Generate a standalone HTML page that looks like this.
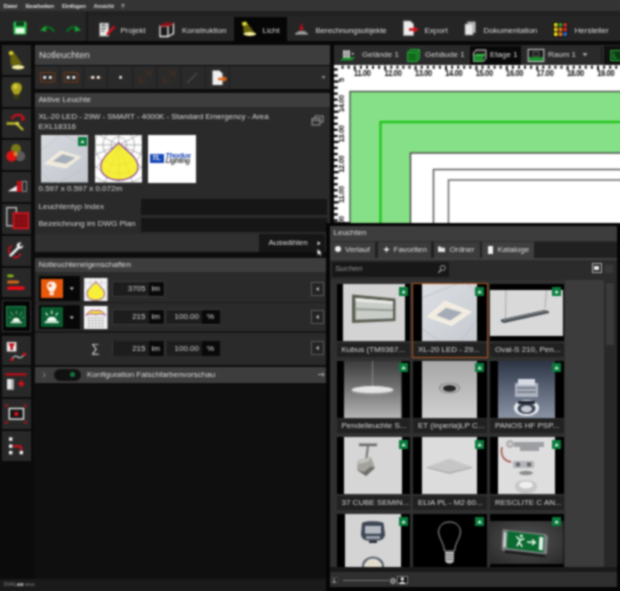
<!DOCTYPE html>
<html><head><meta charset="utf-8"><title>DIALux evo</title>
<style>
html,body{margin:0;padding:0;background:#0c0c0c;}
#root{position:relative;width:620px;height:591px;overflow:hidden;background:#0d0d0d;font-family:"Liberation Sans",sans-serif;filter:url(#blr);}
#root div,#root span,#root svg{position:absolute;box-sizing:border-box;}
#root span{white-space:nowrap;}
</style></head><body><svg width="0" height="0" style="position:absolute"><defs><filter id="blr" x="0" y="0" width="100%" height="100%" color-interpolation-filters="sRGB"><feConvolveMatrix order="5" kernelMatrix="0.0119 0.0627 0.1090 0.0627 0.0119 0.0627 0.3302 0.5746 0.3302 0.0627 0.1090 0.5746 1.0000 0.5746 0.1090 0.0627 0.3302 0.5746 0.3302 0.0627 0.0119 0.0627 0.1090 0.0627 0.0119" divisor="5.6043" edgeMode="duplicate" preserveAlpha="true"/></filter></defs></svg><div id="root">

<div style="left:0px;top:0px;width:620px;height:11px;background:#343434;"></div>
<span style="left:3.5px;top:1.60px;font-size:6px;line-height:8px;color:#dadada;font-weight:bold;letter-spacing:-0.25px;">Datei</span>
<span style="left:25.5px;top:1.60px;font-size:6px;line-height:8px;color:#dadada;font-weight:bold;letter-spacing:-0.25px;">Bearbeiten</span>
<span style="left:62px;top:1.60px;font-size:6px;line-height:8px;color:#dadada;font-weight:bold;letter-spacing:-0.25px;">Einfügen</span>
<span style="left:93.5px;top:1.60px;font-size:6px;line-height:8px;color:#dadada;font-weight:bold;letter-spacing:-0.25px;">Ansicht</span>
<span style="left:121px;top:1.60px;font-size:6px;line-height:8px;color:#dadada;font-weight:bold;letter-spacing:-0.25px;">?</span>
<div style="left:0px;top:11px;width:620px;height:30px;background:#252525;"></div>
<div style="left:88px;top:11px;width:532px;height:5px;background:#212121;"></div>
<div style="left:0px;top:41px;width:620px;height:4.2px;background:#080808;"></div>
<div style="left:0px;top:11px;width:86px;height:30px;background:#262626;"></div>
<div style="left:86px;top:12px;width:1.6px;height:29px;background:#181818;"></div>
<svg style="left:13px;top:21px" width="14" height="14" viewBox="0 0 14 14"><rect x="0.5" y="0.5" width="13" height="13" rx="1.5" fill="#2fbf4f"/><rect x="3" y="0.5" width="8" height="4.5" fill="#0b3d18"/><rect x="2.5" y="7" width="9" height="5.5" fill="#e9ffe9"/></svg>
<svg style="left:39.5px;top:24px" width="16" height="9" viewBox="0 0 16 9"><path d="M3.5 5 C5 1 11.5 0 15.5 7.5 L12.5 8 C10 3.5 7 3.8 5.5 6.3 Z" fill="#0d6420"/><path d="M0 6.3 L5.8 1.6 L6.3 7.8 Z" fill="#1aa233"/></svg>
<svg style="left:65px;top:24px" width="16" height="9" viewBox="0 0 16 9"><path d="M12.5 5 C11 1 4.5 0 0.5 7.5 L3.5 8 C6 3.5 9 3.8 10.5 6.3 Z" fill="#0d6420"/><path d="M16 6.3 L10.2 1.6 L9.7 7.8 Z" fill="#1aa233"/></svg>
<svg style="left:98px;top:21px" width="18" height="17" viewBox="0 0 18 17"><rect x="1.4" y="2" width="9.4" height="13.2" fill="#ececec" stroke="#666" stroke-width="0.8"/><path d="M3 5h6M3 7.6h5M3 10.2h3.5" stroke="#555" stroke-width="1.1"/><path d="M4.2 3.2 L5.2 4.6 L7 2.6" stroke="#333" stroke-width="0.8" fill="none"/><path d="M9.6 13 L15.8 6.2" stroke="#cc0f1a" stroke-width="2.5" stroke-linecap="round"/></svg>
<span style="left:120.5px;top:25.50px;font-size:8px;line-height:10px;color:#dcdcdc;">Projekt</span>
<svg style="left:158px;top:21px" width="18" height="17" viewBox="0 0 18 17"><path d="M2 5 L10 5 L10 15.5 L2 15.5 Z M10 5 L15.5 2.5 L15.5 12.5 L10 15.5" fill="#1a1a1a" stroke="#f0f0f0" stroke-width="1.3"/><path d="M2 5 L7.5 2.2 L15.5 2.5 L10 5 Z" fill="#8e0e16" stroke="#9a1018" stroke-width="1.2"/></svg>
<span style="left:182px;top:25.50px;font-size:8px;line-height:10px;color:#dcdcdc;">Konstruktion</span>
<div style="left:234px;top:16.6px;width:52.6px;height:26px;background:#060606;"></div>
<svg style="left:240px;top:21px" width="17" height="15" viewBox="0 0 17 15"><path d="M3.2 2.6 L7 2 L14.5 11.6 L3.6 12 Z" fill="#66620f"/><path d="M1.8 1.6 L6 0.6 L7.6 3.8 L2.8 5 Z" fill="#e4dc34"/><ellipse cx="9.8" cy="13" rx="6.3" ry="1.9" fill="#f8f2a0"/></svg>
<span style="left:262.5px;top:25.50px;font-size:8px;line-height:10px;color:#dcdcdc;">Licht</span>
<svg style="left:294px;top:21px" width="15" height="14" viewBox="0 0 15 14"><path d="M1.5 12.5 L5 9.8 L10.5 9.8 L13.5 12.5 Z" fill="#8a8a8a"/><path d="M7.5 2.5 L7.5 8 M5.5 6.2 L7.5 8.8 L9.5 6.2" stroke="#b80e18" stroke-width="1.5" fill="none"/><path d="M1.2 12.8 H13.8" stroke="#d8d8d8" stroke-width="1.1"/></svg>
<span style="left:315.5px;top:25.50px;font-size:8px;line-height:10px;color:#dcdcdc;letter-spacing:-0.1px;">Berechnungsobjekte</span>
<svg style="left:402px;top:20px" width="18" height="17" viewBox="0 0 18 17"><path d="M1.5 1 L8.5 1 L11.5 4 L11.5 15.5 L1.5 15.5 Z" fill="#ededed" stroke="#999" stroke-width="0.8"/><path d="M7 9.5 H13" stroke="#d0101a" stroke-width="2.6"/><path d="M12.2 6.2 L16.8 9.5 L12.2 12.8 Z" fill="#d0101a"/></svg>
<span style="left:424.5px;top:25.50px;font-size:8px;line-height:10px;color:#dcdcdc;">Export</span>
<svg style="left:464px;top:21px" width="13" height="15" viewBox="0 0 13 15"><rect x="3.5" y="0.8" width="8" height="11" fill="#bdbdbd" stroke="#777" stroke-width="0.6"/><rect x="1" y="3" width="8" height="11" fill="#e6e6e6" stroke="#888" stroke-width="0.6"/></svg>
<span style="left:483.5px;top:25.50px;font-size:8px;line-height:10px;color:#dcdcdc;">Dokumentation</span>
<svg style="left:553px;top:22px" width="15" height="15" viewBox="0 0 15 15"><rect width="15" height="15" fill="#111"/><rect x="1" y="1" width="3.6" height="3.6" fill="#e8d21a"/><rect x="5.7" y="1" width="3.6" height="3.6" fill="#2ca02c"/><rect x="10.4" y="1" width="3.6" height="3.6" fill="#d03030"/><rect x="1" y="5.7" width="3.6" height="3.6" fill="#e8d21a"/><rect x="5.7" y="5.7" width="3.6" height="3.6" fill="#e87a1a"/><rect x="10.4" y="5.7" width="3.6" height="3.6" fill="#d03030"/><rect x="1" y="10.4" width="3.6" height="3.6" fill="#f0e020"/><rect x="5.7" y="10.4" width="3.6" height="3.6" fill="#e87a1a"/><rect x="10.4" y="10.4" width="3.6" height="3.6" fill="#2070d0"/></svg>
<span style="left:574.5px;top:25.50px;font-size:8px;line-height:10px;color:#dcdcdc;">Hersteller</span>
<div style="left:0px;top:45px;width:34px;height:546px;background:#0b0b0b;"></div>
<div style="left:2px;top:45.0px;width:29px;height:29.8px;background:#282828;"></div>
<svg style="left:1px;top:45.0px" width="32" height="30" viewBox="0 0 32 30"><path d="M9 8 L13 7.3 L21.5 19.5 L9.8 20.2 Z" fill="#66620f"/><path d="M7.6 6.8 L11.2 5.8 L12.8 9 L8.6 10.2 Z" fill="#dcd432"/><ellipse cx="17" cy="22.3" rx="6.4" ry="2.2" fill="#f6f0a4"/></svg>
<div style="left:2px;top:76.8px;width:29px;height:29.8px;background:#282828;"></div>
<svg style="left:1px;top:76.8px" width="32" height="30" viewBox="0 0 32 30"><path d="M15.5 5.5 C19.5 5.5 21.5 8.5 20.7 12 C20.2 14.2 18.3 15.5 18.1 17.6 L12.9 17.6 C12.7 15.5 10.8 14.2 10.3 12 C9.5 8.5 11.5 5.5 15.5 5.5 Z" fill="#aaa41c"/><rect x="13" y="18" width="5" height="4.2" fill="#3e3c10"/><ellipse cx="14.4" cy="9.6" rx="2.1" ry="2.6" fill="#d2cc44"/></svg>
<div style="left:2px;top:108.6px;width:29px;height:29.8px;background:#282828;"></div>
<svg style="left:1px;top:108.6px" width="32" height="30" viewBox="0 0 32 30"><path d="M11 10.5 C12 5 20 4 23 9.5" stroke="#c8101a" stroke-width="2.3" fill="none"/><path d="M20.3 8 L24.8 10.8 L20.3 12.3 Z" fill="#c8101a"/><path d="M5.5 14.5 H16.5" stroke="#b8b228" stroke-width="2.6" fill="none"/><path d="M16 15 L22 21" stroke="#c8c230" stroke-width="2.3" fill="none"/><circle cx="16.3" cy="14.6" r="1.9" fill="#dcd64a"/></svg>
<div style="left:2px;top:140.4px;width:29px;height:29.8px;background:#282828;"></div>
<svg style="left:1px;top:140.4px" width="32" height="30" viewBox="0 0 32 30"><circle cx="15" cy="9" r="5" fill="#7a7a1a"/><circle cx="19.2" cy="16.2" r="5" fill="#5c5c5c"/><circle cx="10.6" cy="16.2" r="5.4" fill="#e01414"/><circle cx="14.5" cy="14" r="2.2" fill="#d88a28"/></svg>
<div style="left:2px;top:172.2px;width:29px;height:29.8px;background:#282828;"></div>
<svg style="left:1px;top:172.2px" width="32" height="30" viewBox="0 0 32 30"><path d="M6.7 19.3 L16.6 19.3 L16.6 13.3 Z" fill="#f4f4f4"/><rect x="15.8" y="9" width="5" height="11" fill="#c0101a"/><rect x="21.3" y="9.5" width="4.4" height="9.8" fill="#2a2a2a" stroke="#9a9a9a" stroke-width="0.9"/></svg>
<div style="left:2px;top:204.0px;width:29px;height:29.8px;background:#282828;"></div>
<svg style="left:1px;top:204.0px" width="32" height="30" viewBox="0 0 32 30"><rect x="5.8" y="3.6" width="9.6" height="18.2" fill="none" stroke="#d4d4d4" stroke-width="1.2"/><path d="M12.5 9.2 H27.3 V24.3 H12.5 Z" fill="#7e0e14" stroke="#d8151f" stroke-width="1.7"/><path d="M12.5 14 H27.3 M12.5 19 H27.3 M17.5 9.2 V24.3 M22.5 9.2 V24.3" stroke="#a01018" stroke-width="0.7"/></svg>
<div style="left:2px;top:235.8px;width:29px;height:29.8px;background:#282828;"></div>
<svg style="left:1px;top:235.8px" width="32" height="30" viewBox="0 0 32 30"><g transform="translate(2.8,2.6) scale(0.76)"><path d="M9 22 L18.5 12.5" stroke="#f2f2f2" stroke-width="3.5" stroke-linecap="round"/><path d="M17 8 C18 5.5 21 4.5 23.5 5.5 L20.5 8.5 L21.5 10.5 L24 10 L25.5 8 C26 11 24 13.5 21 13.5 C18.5 13.5 16.5 11 17 8 Z" fill="#f2f2f2"/><path d="M10.5 9.5 C6 11.5 5.5 16.5 8 19.5 M12 24 C16 26 20.5 24.5 22 19.5" stroke="#c8101a" stroke-width="2.4" fill="none"/></g></svg>
<div style="left:2px;top:267.6px;width:29px;height:29.8px;background:#282828;"></div>
<svg style="left:1px;top:267.6px" width="32" height="30" viewBox="0 0 32 30"><path d="M6.4 6.6 H11.6 L13.2 7.9 L11.6 9.2 H6.4 Z" fill="#8ab81a"/><path d="M6.4 12.5 H17 L18.6 14 L17 15.5 H6.4 Z" fill="#d86a18"/><path d="M6.4 18.3 H22.4 L24.2 20.1 L22.4 21.9 H6.4 Z" fill="#e40e18"/></svg>
<div style="left:1.8px;top:300.3px;width:29.4px;height:31.8px;background:#050505;border:1.6px solid #363636;"></div>
<svg style="left:6.4px;top:306.1px" width="20" height="20.6" viewBox="0 0 21 21" preserveAspectRatio="none"><rect width="21" height="21" fill="#095229"/><rect x="0.6" y="0.6" width="19.8" height="19.8" fill="none" stroke="#1f8a50" stroke-width="1.1"/><path d="M6.5 16 C6.5 10.8 14.8 10.8 14.8 16 Z" fill="#f4fff6"/><rect x="4.5" y="16" width="12.5" height="1.6" fill="#c8e8d0"/><path d="M11 8.5 V5 M7.5 10 L5 6 M14.5 10 L17 6 M5.5 12.5 L3 11 M16.5 12.5 L19 11" stroke="#8fcfa8" stroke-width="0.8"/></svg>
<div style="left:2px;top:335.5px;width:29px;height:29.8px;background:#282828;"></div>
<svg style="left:1px;top:335.5px" width="32" height="30" viewBox="0 0 32 30"><rect x="5.8" y="6" width="9.6" height="9.5" fill="#ececec"/><path d="M7.3 7.3 H14 L12 11 V14 H9.4 V11 Z" fill="#c8101a"/><path d="M10.8 23.5 C12.5 19.5 15 19.5 16.8 21 C18.5 22.5 21 22 23.4 18.2" stroke="#d8d8d8" stroke-width="1.1" fill="none"/><circle cx="10.8" cy="23.6" r="1.7" fill="#d8101a"/><circle cx="23.4" cy="18.2" r="1.7" fill="#d8101a"/></svg>
<div style="left:2px;top:367.4px;width:29px;height:29.8px;background:#282828;"></div>
<svg style="left:1px;top:367.4px" width="32" height="30" viewBox="0 0 32 30"><rect x="4.4" y="6.2" width="21" height="2.4" fill="#b80e18"/><rect x="6" y="12" width="6.8" height="10.6" fill="#e4e4e4"/><rect x="10.6" y="12" width="2.2" height="10.6" fill="#a0a0a0"/><circle cx="20.3" cy="16.8" r="2.3" fill="#d8101a"/><path d="M16.5 16.8 H24.1 M20.3 13 V20.6" stroke="#d8101a" stroke-width="0.9"/></svg>
<div style="left:2px;top:399.3px;width:29px;height:29.8px;background:#282828;"></div>
<svg style="left:1px;top:399.3px" width="32" height="30" viewBox="0 0 32 30"><rect x="8.3" y="9.5" width="14.2" height="10.6" fill="#151515" stroke="#ececec" stroke-width="1.4"/><circle cx="15.3" cy="14.9" r="2.2" fill="#d8101a"/><path d="M4.9 8.4 V6.1 H7.2 M22.8 6.1 H25.1 V8.4 M25.1 21.6 V23.9 H22.8 M7.2 23.9 H4.9 V21.6" stroke="#c0101a" stroke-width="1.2" fill="none"/></svg>
<div style="left:2px;top:431.2px;width:29px;height:29.8px;background:#282828;"></div>
<svg style="left:1px;top:431.2px" width="32" height="30" viewBox="0 0 32 30"><path d="M12 15.2 H18.3 Q20.3 15.2 20.3 17.2 V19.5" stroke="#d8101a" stroke-width="2" fill="none"/><rect x="8" y="6.4" width="3.4" height="3.4" fill="#f4f4f4"/><rect x="8" y="13.5" width="3.4" height="3.4" fill="#f4f4f4"/><rect x="8" y="19.9" width="3.4" height="3.4" fill="#f4f4f4"/><rect x="18.6" y="19.9" width="3.4" height="3.4" fill="#f4f4f4"/></svg>
<div style="left:35px;top:45px;width:294.6px;height:20px;background:#3d3d3d;"></div>
<span style="left:39px;top:49.25px;font-size:9.5px;line-height:11.5px;color:#dedede;">Notleuchten</span>
<div style="left:35px;top:66px;width:294.6px;height:23px;background:#2a2a2a;"></div>
<div style="left:58.8px;top:66px;width:1px;height:23px;background:#1d1d1d;"></div>
<div style="left:83.1px;top:66px;width:1px;height:23px;background:#1d1d1d;"></div>
<div style="left:107.4px;top:66px;width:1px;height:23px;background:#1d1d1d;"></div>
<div style="left:131.7px;top:66px;width:1px;height:23px;background:#1d1d1d;"></div>
<div style="left:156.0px;top:66px;width:1px;height:23px;background:#1d1d1d;"></div>
<div style="left:180.3px;top:66px;width:1px;height:23px;background:#1d1d1d;"></div>
<div style="left:204.6px;top:66px;width:1px;height:23px;background:#1d1d1d;"></div>
<div style="left:228.9px;top:66px;width:1px;height:23px;background:#1d1d1d;"></div>
<svg style="left:0;top:0" width="340" height="100" viewBox="0 0 340 100"><rect x="40.5" y="72.5" width="14" height="9.5" rx="2" fill="none" stroke="#7a3a12" stroke-width="1.1"/><rect x="43.3" y="76" width="2.8" height="2.8" fill="#f2f2f2"/><rect x="48.9" y="76" width="2.8" height="2.8" fill="#f2f2f2"/><rect x="64" y="72.5" width="14" height="9.5" rx="2" fill="none" stroke="#7a3a12" stroke-width="1.1"/><rect x="66.8" y="76" width="2.8" height="2.8" fill="#f2f2f2"/><rect x="72.4" y="76" width="2.8" height="2.8" fill="#f2f2f2"/><path d="M88.5 77.3 H102.5" stroke="#7a3a12" stroke-width="1.1"/><rect x="91.3" y="76" width="2.8" height="2.8" fill="#f2f2f2"/><rect x="96.9" y="76" width="2.8" height="2.8" fill="#f2f2f2"/><rect x="119.3" y="76" width="2.6" height="2.6" fill="#eee"/><path d="M140 82 L150 72 M139.5 76 V82.5 H146 M144 71.5 H150.5 V78" stroke="#4a3020" stroke-width="1" fill="none"/><path d="M164 82 L174 72 M163.5 76 V82.5 H170 M168 71.5 H174.5 V78" stroke="#4a3020" stroke-width="1" fill="none"/><path d="M187 83 L197 73" stroke="#484848" stroke-width="1.5"/><path d="M186 80 L190 84" stroke="#4a3020" stroke-width="1"/><path d="M212.5 70.5 L219.5 70.5 L222.5 73.5 L222.5 85 L212.5 85 Z" fill="#f0f0f0"/><path d="M218 79 H224" stroke="#e0651a" stroke-width="2.4"/><path d="M223.3 75.8 L227.5 79 L223.3 82.2 Z" fill="#e0651a"/><path d="M321.5 76.3 L325.5 76.3 L323.5 78.8 Z" fill="#aaa"/></svg>
<div style="left:35px;top:93px;width:294.6px;height:13.5px;background:#3d3d3d;"></div>
<span style="left:38.5px;top:94.80px;font-size:8px;line-height:10px;color:#dadada;">Aktive Leuchte</span>
<div style="left:35px;top:106.5px;width:294.6px;height:145.5px;background:#2a2a2a;"></div>
<span style="left:38.5px;top:112.30px;font-size:8px;line-height:10px;color:#d6d6d6;letter-spacing:-0.06px;">XL-20 LED - 29W - SMART - 4000K - Standard Emergency - Area</span>
<span style="left:38.5px;top:122.00px;font-size:8px;line-height:10px;color:#d6d6d6;">EXL18316</span>
<svg style="left:310.5px;top:114.5px" width="13" height="11" viewBox="0 0 13 11"><rect x="4" y="1" width="8" height="6" fill="#2e2e2e" stroke="#a4a4a4" stroke-width="0.9"/><rect x="1" y="3.5" width="8" height="6.5" fill="#2e2e2e" stroke="#a4a4a4" stroke-width="0.9"/><path d="M1 5.6 H9" stroke="#a4a4a4" stroke-width="0.8"/></svg>
<svg style="left:40.5px;top:135px" width="47.5" height="47.5" viewBox="0 0 48 48" preserveAspectRatio="none">
<defs><linearGradient id="c1g" x1="0" y1="0" x2="1" y2="1"><stop offset="0" stop-color="#d6d9de"/><stop offset="1" stop-color="#c2c6cd"/></linearGradient></defs>
<rect width="48" height="48" fill="url(#c1g)"/>
<path d="M-2 17 L22 -2 M14 50 L50 30 M-2 34 L12 50 M20 -2 L50 14" stroke="#bcc0c6" stroke-width="0.8" fill="none"/>
<path d="M4.2 29 L19.8 16.3 L39.4 22.3 L25.2 33 Z" fill="#efe9da" stroke="#f6f1e4" stroke-width="1.2"/>
<path d="M11.9 26.4 L22 19.4 L34.8 22.9 L25.2 29 Z" fill="#a4adb9"/>
</svg>
<div style="left:78px;top:137px;width:9px;height:9px;background:#0a7a3c;"></div>
<svg style="left:78px;top:137px" width="9" height="9" viewBox="0 0 9 9"><path d="M2.5 6 L4.5 3 L6.5 6 Z" fill="#eafff0"/></svg>
<svg style="left:94.5px;top:135px" width="47.5" height="47.5" viewBox="0 0 48 48" preserveAspectRatio="none">
<rect width="48" height="48" fill="#fdfdfd"/>
<g stroke="#777" stroke-width="0.55" fill="none">
<circle cx="24" cy="10" r="8"/><circle cx="24" cy="10" r="16"/><circle cx="24" cy="10" r="24"/><circle cx="24" cy="10" r="32"/><circle cx="24" cy="10" r="40"/>
<path d="M24 0 V48 M0 10 H48 M24 10 L0 34 M24 10 L48 34 M24 10 L10 48 M24 10 L38 48 M24 10 L0 20 M24 10 L48 20 M24 10 L4 0 M24 10 L44 0"/></g>
<path d="M24 7.8 C28 13 43.5 22 43.5 32 C43.5 41 33 45.6 24 45.6 C15 45.6 5.8 41 5.8 32 C5.8 22 20 13 24 7.8 Z" fill="#f6f03a" stroke="#7a2a9a" stroke-width="1.1"/>
<g stroke="#d8cc30" stroke-width="0.4" fill="none"><path d="M24 10 V45 M24 10 L12 42 M24 10 L36 42"/><path d="M10 26 C18 32 30 32 38 26 M8.5 34 C18 41 30 41 39.5 34"/></g>
</svg>
<div style="left:148px;top:135px;width:47.5px;height:47.5px;background:#ffffff;"></div>
<div style="left:150.3px;top:153.6px;width:13.3px;height:9.6px;background:#1446b8;"></div>
<span style="left:151.8px;top:153.40px;font-size:8px;line-height:10px;color:#e8e8e8;font-weight:bold;font-style:italic;letter-spacing:-0.6px;">TL</span>
<span style="left:165.3px;top:151.00px;font-size:7.6px;line-height:9.6px;color:#123fae;font-weight:bold;font-style:italic;letter-spacing:-0.35px;">Thorlux</span>
<span style="left:165.5px;top:157.40px;font-size:6.8px;line-height:8.8px;color:#3a3a3a;font-style:italic;font-weight:bold;letter-spacing:-0.3px;">Lighting</span>
<span style="left:38.5px;top:184.00px;font-size:8px;line-height:10px;color:#d6d6d6;">0.597 x 0.597 x 0.072m</span>
<span style="left:38.5px;top:202.30px;font-size:8px;line-height:10px;color:#d1d1d1;">Leuchtentyp Index</span>
<div style="left:140.5px;top:199px;width:186.5px;height:16px;background:#161616;"></div>
<span style="left:38.5px;top:219.30px;font-size:8px;line-height:10px;color:#d1d1d1;">Bezeichnung im DWG Plan</span>
<div style="left:140.5px;top:218px;width:186.5px;height:13.5px;background:#161616;"></div>
<div style="left:35px;top:234px;width:294.6px;height:18px;background:#303030;"></div>
<div style="left:259px;top:234px;width:65.5px;height:18px;background:#161616;"></div>
<span style="left:268.5px;top:238.00px;font-size:8px;line-height:10px;color:#dadada;">Auswählen</span>
<svg style="left:314px;top:238px" width="12" height="20" viewBox="0 0 12 20"><path d="M3.6 3.2 L6.6 5.3 L3.6 7.4 Z" fill="#e4e4e4"/><path d="M3.3 10.8 L3.3 17.3 L5 15.7 L6.2 18.1 L7.3 17.5 L6.2 15.3 L8.3 15.3 Z" fill="#fff" stroke="#222" stroke-width="0.5"/></svg>
<div style="left:35px;top:258px;width:294.6px;height:14px;background:#3d3d3d;"></div>
<span style="left:38.5px;top:260.00px;font-size:8px;line-height:10px;color:#dadada;">Notleuchteneigenschaften</span>
<div style="left:35px;top:272px;width:294.6px;height:93px;background:#2a2a2a;"></div>
<div style="left:35px;top:302px;width:294.6px;height:1.2px;background:#1c1c1c;"></div>
<div style="left:35px;top:331px;width:294.6px;height:1.5px;background:#171717;"></div>
<div style="left:38.5px;top:276px;width:41px;height:24.5px;background:#070707;"></div>
<div style="left:41px;top:278.5px;width:21.5px;height:19.5px;background:#e8590c;"></div>
<svg style="left:41px;top:278.5px" width="21.5" height="19.5" viewBox="0 0 21.5 19.5"><path d="M10.7 2.5 C14.2 2.5 16 5.3 15.4 8 C15 10 13.2 11 13 12.8 L8.4 12.8 C8.2 11 6.4 10 6 8 C5.4 5.3 7.2 2.5 10.7 2.5 Z" fill="#fff3e8"/><rect x="8.6" y="13.4" width="4.2" height="2.8" fill="#fff3e8"/><circle cx="9" cy="6.5" r="1.6" fill="#e8590c"/></svg>
<svg style="left:68px;top:286px" width="8" height="6" viewBox="0 0 8 6"><path d="M1.8 1.4 L5.8 1.4 L3.8 4 Z" fill="#e8e8e8"/></svg>
<svg style="left:84px;top:277.5px" width="23.5" height="23.5" viewBox="0 0 24 24"><rect width="24" height="24" fill="#f4f4f4"/><g stroke="#aaa" stroke-width="0.4" fill="none"><circle cx="12" cy="5" r="6"/><circle cx="12" cy="5" r="12"/><circle cx="12" cy="5" r="18"/><path d="M12 0 V24 M0 5 H24"/></g><path d="M12 3.8 C14 7 21 11 21 16 C21 20.5 16.5 22.8 12 22.8 C7.5 22.8 3 20.5 3 16 C3 11 10 7 12 3.8 Z" fill="#f6f03a" stroke="#8a2aa0" stroke-width="0.9"/></svg>
<div style="left:112px;top:281.0px;width:52.5px;height:15.5px;background:#3a3a3a;"></div>
<div style="left:112.5px;top:281.5px;width:36px;height:14.5px;background:#1d1d1d;"></div>
<span style="left:112.5px;top:284.00px;font-size:8px;line-height:10px;color:#d3d3d3;width:36px;text-align:right;padding-right:3px;">3705</span>
<div style="left:148.5px;top:281.5px;width:15.5px;height:14.5px;background:#090909;"></div>
<span style="left:151.5px;top:284.00px;font-size:8px;line-height:10px;color:#dadada;">lm</span>
<div style="left:38.5px;top:304.5px;width:41px;height:24.5px;background:#070707;"></div>
<div style="left:41px;top:307px;width:21.5px;height:19.5px;background:#0a5c30;"></div>
<svg style="left:41px;top:307px" width="21.5" height="19.5" viewBox="0 0 21.5 19.5"><path d="M5.8 14 C5.8 8.3 15.7 8.3 15.7 14 Z" fill="#f4fff6"/><rect x="3.8" y="14.3" width="13.9" height="1.8" fill="#e8f8ea"/><path d="M10.7 7 V3.5 M6.7 8.4 L4.7 5.9 M14.7 8.4 L16.7 5.9" stroke="#f4fff6" stroke-width="1.2"/></svg>
<svg style="left:68px;top:314.5px" width="8" height="6" viewBox="0 0 8 6"><path d="M1.8 1.4 L5.8 1.4 L3.8 4 Z" fill="#e8e8e8"/></svg>
<svg style="left:84px;top:305.5px" width="23.5" height="23.5" viewBox="0 0 24 24"><rect width="24" height="24" fill="#f4f4f4"/><g stroke="#9a9a9a" stroke-width="0.5" fill="none"><path d="M3 12 H21 M3 15 H21 M3 18 H21 M3 21 H21 M5 11 V22 M8.5 11 V22 M12 11 V22 M15.5 11 V22 M19 11 V22"/></g><path d="M2 9.5 C5 4.5 9 3.5 12 5 C15 3.5 19 4.5 22 9.5 C19 8 15 7.5 12 9 C9 7.5 5 8 2 9.5 Z" fill="#f6e040" stroke="#8a2aa0" stroke-width="0.8"/></svg>
<div style="left:112px;top:309.0px;width:52.5px;height:15.5px;background:#3a3a3a;"></div>
<div style="left:112.5px;top:309.5px;width:36px;height:14.5px;background:#1d1d1d;"></div>
<span style="left:112.5px;top:312.00px;font-size:8px;line-height:10px;color:#d3d3d3;width:36px;text-align:right;padding-right:3px;">215</span>
<div style="left:148.5px;top:309.5px;width:15.5px;height:14.5px;background:#090909;"></div>
<span style="left:151.5px;top:312.00px;font-size:8px;line-height:10px;color:#dadada;">lm</span>
<div style="left:166.5px;top:309.0px;width:53.5px;height:15.5px;background:#3a3a3a;"></div>
<div style="left:167px;top:309.5px;width:35px;height:14.5px;background:#1d1d1d;"></div>
<span style="left:167px;top:312.00px;font-size:8px;line-height:10px;color:#d3d3d3;width:35px;text-align:right;padding-right:3px;">100.00</span>
<div style="left:202px;top:309.5px;width:17.5px;height:14.5px;background:#090909;"></div>
<span style="left:207px;top:312.00px;font-size:8px;line-height:10px;color:#dadada;">%</span>
<span style="left:91px;top:341.00px;font-size:12px;line-height:14px;color:#dadada;font-family:"DejaVu Sans","Liberation Sans",sans-serif;">∑</span>
<div style="left:112px;top:340.5px;width:52.5px;height:15.5px;background:#3a3a3a;"></div>
<div style="left:112.5px;top:341px;width:36px;height:14.5px;background:#1d1d1d;"></div>
<span style="left:112.5px;top:343.50px;font-size:8px;line-height:10px;color:#d3d3d3;width:36px;text-align:right;padding-right:3px;">215</span>
<div style="left:148.5px;top:341px;width:15.5px;height:14.5px;background:#090909;"></div>
<span style="left:151.5px;top:343.50px;font-size:8px;line-height:10px;color:#dadada;">lm</span>
<div style="left:166.5px;top:340.5px;width:53.5px;height:15.5px;background:#3a3a3a;"></div>
<div style="left:167px;top:341px;width:35px;height:14.5px;background:#1d1d1d;"></div>
<span style="left:167px;top:343.50px;font-size:8px;line-height:10px;color:#d3d3d3;width:35px;text-align:right;padding-right:3px;">100.00</span>
<div style="left:202px;top:341px;width:17.5px;height:14.5px;background:#090909;"></div>
<span style="left:207px;top:343.50px;font-size:8px;line-height:10px;color:#dadada;">%</span>
<div style="left:311px;top:282px;width:13px;height:14px;background:#242424;border:1px solid #5a5a5a;"></div>
<svg style="left:311px;top:282px" width="13" height="14" viewBox="0 0 13 14"><path d="M7.7 5 L7.7 9 L5 7 Z" fill="#d4d4d4"/></svg>
<div style="left:311px;top:309.5px;width:13px;height:14px;background:#242424;border:1px solid #5a5a5a;"></div>
<svg style="left:311px;top:309.5px" width="13" height="14" viewBox="0 0 13 14"><path d="M7.7 5 L7.7 9 L5 7 Z" fill="#d4d4d4"/></svg>
<div style="left:311px;top:341px;width:13px;height:14px;background:#242424;border:1px solid #5a5a5a;"></div>
<svg style="left:311px;top:341px" width="13" height="14" viewBox="0 0 13 14"><path d="M7.7 5 L7.7 9 L5 7 Z" fill="#d4d4d4"/></svg>
<div style="left:35px;top:367px;width:294.6px;height:15.5px;background:#3d3d3d;"></div>
<svg style="left:40px;top:371px" width="8" height="8" viewBox="0 0 8 8"><path d="M2.8 1.6 L5.4 4 L2.8 6.4" stroke="#8c8c8c" stroke-width="1" fill="none"/></svg>
<div style="left:54px;top:368.5px;width:26.5px;height:12.5px;background:#111111;border-radius:6.5px;"></div>
<div style="left:70.2px;top:372.2px;width:5px;height:5px;background:#127a3a;border-radius:2.5px;"></div>
<span style="left:87px;top:369.70px;font-size:8px;line-height:10px;color:#dadada;">Konfiguration Falschfarbenvorschau</span>
<svg style="left:316px;top:370px" width="10" height="9" viewBox="0 0 10 9"><path d="M2 4.5 H8 M6 2.6 L8.2 4.5 L6 6.4" stroke="#b4b4b4" stroke-width="0.9" fill="none"/></svg>
<div style="left:34px;top:382.5px;width:296px;height:196px;background:#0f0f0f;"></div>
<div style="left:0px;top:578.5px;width:327px;height:12.5px;background:#1a1a1a;"></div>
<span style="left:4px;top:581.40px;font-size:5.8px;line-height:7.8px;color:#8c8c8c;">DIAL<b style="color:#e8e8e8">ux</b> evo</span>
<div style="left:329.6px;top:45px;width:4px;height:180px;background:#080808;"></div>
<div style="left:333.5px;top:45px;width:286.5px;height:20.2px;background:#2a2a2a;"></div>
<div style="left:470px;top:46px;width:51px;height:18.5px;background:#080808;"></div>
<div style="left:601px;top:47px;width:1px;height:16px;background:#151515;"></div>
<div style="left:603.5px;top:46px;width:17px;height:18.5px;background:#101010;"></div>
<svg style="left:339px;top:49px" width="18" height="13" viewBox="0 0 18 13"><path d="M1 11.5 L5 8 L16 8 L13 11.5 Z" fill="#1c8c2c"/><rect x="4" y="1.5" width="7" height="7" fill="#eee"/><path d="M6.3 1.5 V8.5 M8.6 1.5 V8.5 M4 4 H11 M4 6.3 H11" stroke="#444" stroke-width="0.6"/><path d="M12.3 4 L15.3 4 L13.8 6 Z" fill="#ddd"/></svg>
<span style="left:362px;top:50.00px;font-size:8px;line-height:10px;color:#d6d6d6;">Gelände 1</span>
<svg style="left:406px;top:48px" width="15" height="15" viewBox="0 0 15 15"><path d="M1.5 4.5 L4 1.5 L13.5 1.5 L13.5 10.5 L11 13.5 L1.5 13.5 Z" fill="#126a1c" stroke="#28a838" stroke-width="1"/><path d="M1.5 4.5 H11 V13.5 M11 4.5 L13.5 1.5" stroke="#28a838" stroke-width="0.9" fill="none"/></svg>
<span style="left:425px;top:50.00px;font-size:8px;line-height:10px;color:#d6d6d6;">Gebäude 1</span>
<svg style="left:471.5px;top:48px" width="16" height="15" viewBox="0 0 16 15"><path d="M1.5 5 L4 2 L14 2 L14 10.5 L11.5 13.5 L1.5 13.5 Z" fill="#1d1d1d" stroke="#d8d8d8" stroke-width="1"/><path d="M1.5 8.5 L4 6 L14 6 L11.5 8.5 Z" fill="#39c04a"/><path d="M1.5 8.5 H11.5 V13.5 H1.5 Z" fill="#1c8c2c"/></svg>
<span style="left:490px;top:50.00px;font-size:8px;line-height:10px;color:#dedede;">Etage 1</span>
<svg style="left:526.5px;top:48px" width="18" height="15" viewBox="0 0 18 15"><rect x="1.2" y="1.5" width="15.6" height="12" fill="#151515" stroke="#d0d0d0" stroke-width="1.1"/><rect x="2" y="9" width="14" height="4" fill="#1c8c2c"/><path d="M6 4 H12 V8 H6 Z" fill="none" stroke="#888" stroke-width="0.7"/></svg>
<span style="left:548px;top:50.00px;font-size:8px;line-height:10px;color:#d6d6d6;">Raum 1</span>
<svg style="left:581px;top:52px" width="8" height="6" viewBox="0 0 8 6"><path d="M1.5 1.2 L6.5 1.2 L4 4.2 Z" fill="#bbb"/></svg>
<svg style="left:609.5px;top:48px" width="11" height="15" viewBox="0 0 13 15"><rect x="1" y="1.5" width="14" height="12" fill="#0c3a14" stroke="#2fb53f" stroke-width="1.2"/><path d="M4.5 4.5 V10.5 H8" stroke="#2fb53f" stroke-width="1.1" fill="none"/></svg>
<div style="left:333.5px;top:65.2px;width:286.5px;height:157.3px;background:#ffffff;"></div>
<svg style="left:333.5px;top:64.5px" width="286.5" height="158" viewBox="333.5 64.5 286.5 158"><rect x="349.5" y="91" width="290" height="160" fill="#86e087" stroke="#3c4a3c" stroke-width="1.3"/><rect x="380" y="121.5" width="260" height="130" fill="none" stroke="#18c418" stroke-width="2.2"/><rect x="410" y="152.5" width="230" height="100" fill="#ffffff" stroke="#383838" stroke-width="1.3"/><rect x="433" y="169" width="210" height="80" fill="none" stroke="#5a5a5a" stroke-width="1.5"/><rect x="448" y="179.5" width="200" height="80" fill="none" stroke="#6a6a6a" stroke-width="1.5"/><rect x="341.1" y="65.2" width="2" height="3" fill="#0a0a0a"/><rect x="347.2" y="65.2" width="2" height="3" fill="#0a0a0a"/><rect x="353.3" y="65.2" width="2" height="4.5" fill="#0a0a0a"/><rect x="359.4" y="65.2" width="2" height="3" fill="#0a0a0a"/><rect x="365.5" y="65.2" width="2" height="3" fill="#0a0a0a"/><rect x="371.5" y="65.2" width="2" height="3" fill="#0a0a0a"/><rect x="377.6" y="65.2" width="2" height="3" fill="#0a0a0a"/><rect x="383.7" y="65.2" width="2" height="4.5" fill="#0a0a0a"/><rect x="389.8" y="65.2" width="2" height="3" fill="#0a0a0a"/><rect x="395.9" y="65.2" width="2" height="3" fill="#0a0a0a"/><rect x="401.9" y="65.2" width="2" height="3" fill="#0a0a0a"/><rect x="408.0" y="65.2" width="2" height="3" fill="#0a0a0a"/><rect x="414.1" y="65.2" width="2" height="4.5" fill="#0a0a0a"/><rect x="420.2" y="65.2" width="2" height="3" fill="#0a0a0a"/><rect x="426.3" y="65.2" width="2" height="3" fill="#0a0a0a"/><rect x="432.3" y="65.2" width="2" height="3" fill="#0a0a0a"/><rect x="438.4" y="65.2" width="2" height="3" fill="#0a0a0a"/><rect x="444.5" y="65.2" width="2" height="4.5" fill="#0a0a0a"/><rect x="450.6" y="65.2" width="2" height="3" fill="#0a0a0a"/><rect x="456.7" y="65.2" width="2" height="3" fill="#0a0a0a"/><rect x="462.7" y="65.2" width="2" height="3" fill="#0a0a0a"/><rect x="468.8" y="65.2" width="2" height="3" fill="#0a0a0a"/><rect x="474.9" y="65.2" width="2" height="4.5" fill="#0a0a0a"/><rect x="481.0" y="65.2" width="2" height="3" fill="#0a0a0a"/><rect x="487.1" y="65.2" width="2" height="3" fill="#0a0a0a"/><rect x="493.1" y="65.2" width="2" height="3" fill="#0a0a0a"/><rect x="499.2" y="65.2" width="2" height="3" fill="#0a0a0a"/><rect x="505.3" y="65.2" width="2" height="4.5" fill="#0a0a0a"/><rect x="511.4" y="65.2" width="2" height="3" fill="#0a0a0a"/><rect x="517.5" y="65.2" width="2" height="3" fill="#0a0a0a"/><rect x="523.5" y="65.2" width="2" height="3" fill="#0a0a0a"/><rect x="529.6" y="65.2" width="2" height="3" fill="#0a0a0a"/><rect x="535.7" y="65.2" width="2" height="4.5" fill="#0a0a0a"/><rect x="541.8" y="65.2" width="2" height="3" fill="#0a0a0a"/><rect x="547.9" y="65.2" width="2" height="3" fill="#0a0a0a"/><rect x="553.9" y="65.2" width="2" height="3" fill="#0a0a0a"/><rect x="560.0" y="65.2" width="2" height="3" fill="#0a0a0a"/><rect x="566.1" y="65.2" width="2" height="4.5" fill="#0a0a0a"/><rect x="572.2" y="65.2" width="2" height="3" fill="#0a0a0a"/><rect x="578.3" y="65.2" width="2" height="3" fill="#0a0a0a"/><rect x="584.3" y="65.2" width="2" height="3" fill="#0a0a0a"/><rect x="590.4" y="65.2" width="2" height="3" fill="#0a0a0a"/><rect x="596.5" y="65.2" width="2" height="4.5" fill="#0a0a0a"/><rect x="602.6" y="65.2" width="2" height="3" fill="#0a0a0a"/><rect x="608.7" y="65.2" width="2" height="3" fill="#0a0a0a"/><rect x="614.7" y="65.2" width="2" height="3" fill="#0a0a0a"/><rect x="620.8" y="65.2" width="2" height="3" fill="#0a0a0a"/><rect x="333.5" y="67.8" width="3.7" height="2.3" fill="#050505"/><rect x="333.5" y="73.9" width="3.7" height="2.3" fill="#050505"/><rect x="333.5" y="79.9" width="4.6" height="2.3" fill="#050505"/><rect x="333.5" y="85.9" width="3.7" height="2.3" fill="#050505"/><rect x="333.5" y="92.0" width="3.7" height="2.3" fill="#050505"/><rect x="333.5" y="98.0" width="3.7" height="2.3" fill="#050505"/><rect x="333.5" y="104.1" width="3.7" height="2.3" fill="#050505"/><rect x="333.5" y="110.1" width="4.6" height="2.3" fill="#050505"/><rect x="333.5" y="116.1" width="3.7" height="2.3" fill="#050505"/><rect x="333.5" y="122.2" width="3.7" height="2.3" fill="#050505"/><rect x="333.5" y="128.2" width="3.7" height="2.3" fill="#050505"/><rect x="333.5" y="134.3" width="3.7" height="2.3" fill="#050505"/><rect x="333.5" y="140.3" width="4.6" height="2.3" fill="#050505"/><rect x="333.5" y="146.3" width="3.7" height="2.3" fill="#050505"/><rect x="333.5" y="152.4" width="3.7" height="2.3" fill="#050505"/><rect x="333.5" y="158.4" width="3.7" height="2.3" fill="#050505"/><rect x="333.5" y="164.5" width="3.7" height="2.3" fill="#050505"/><rect x="333.5" y="170.5" width="4.6" height="2.3" fill="#050505"/><rect x="333.5" y="176.5" width="3.7" height="2.3" fill="#050505"/><rect x="333.5" y="182.6" width="3.7" height="2.3" fill="#050505"/><rect x="333.5" y="188.6" width="3.7" height="2.3" fill="#050505"/><rect x="333.5" y="194.7" width="3.7" height="2.3" fill="#050505"/><rect x="333.5" y="200.7" width="4.6" height="2.3" fill="#050505"/><rect x="333.5" y="206.7" width="3.7" height="2.3" fill="#050505"/><rect x="333.5" y="212.8" width="3.7" height="2.3" fill="#050505"/><rect x="333.5" y="218.8" width="3.7" height="2.3" fill="#050505"/><text transform="translate(353.6,75.4) scale(1,1.18)" font-size="7.4" font-weight="bold" fill="#0a0a0a" font-family="Liberation Sans, sans-serif" letter-spacing="-0.3">11.00</text><text transform="translate(384.0,75.4) scale(1,1.18)" font-size="7.4" font-weight="bold" fill="#0a0a0a" font-family="Liberation Sans, sans-serif" letter-spacing="-0.3">12.00</text><text transform="translate(414.4,75.4) scale(1,1.18)" font-size="7.4" font-weight="bold" fill="#0a0a0a" font-family="Liberation Sans, sans-serif" letter-spacing="-0.3">13.00</text><text transform="translate(444.8,75.4) scale(1,1.18)" font-size="7.4" font-weight="bold" fill="#0a0a0a" font-family="Liberation Sans, sans-serif" letter-spacing="-0.3">14.00</text><text transform="translate(475.2,75.4) scale(1,1.18)" font-size="7.4" font-weight="bold" fill="#0a0a0a" font-family="Liberation Sans, sans-serif" letter-spacing="-0.3">15.00</text><text transform="translate(505.6,75.4) scale(1,1.18)" font-size="7.4" font-weight="bold" fill="#0a0a0a" font-family="Liberation Sans, sans-serif" letter-spacing="-0.3">16.00</text><text transform="translate(536.0,75.4) scale(1,1.18)" font-size="7.4" font-weight="bold" fill="#0a0a0a" font-family="Liberation Sans, sans-serif" letter-spacing="-0.3">17.00</text><text transform="translate(566.4,75.4) scale(1,1.18)" font-size="7.4" font-weight="bold" fill="#0a0a0a" font-family="Liberation Sans, sans-serif" letter-spacing="-0.3">18.00</text><text transform="translate(596.8,75.4) scale(1,1.18)" font-size="7.4" font-weight="bold" fill="#0a0a0a" font-family="Liberation Sans, sans-serif" letter-spacing="-0.3">19.00</text><text transform="translate(627.2,75.4) scale(1,1.18)" font-size="7.4" font-weight="bold" fill="#0a0a0a" font-family="Liberation Sans, sans-serif" letter-spacing="-0.3">20.00</text><text transform="translate(343.6,81.6) rotate(-90) scale(1,1.02)" font-size="7.4" font-weight="bold" fill="#0a0a0a" font-family="Liberation Sans, sans-serif" letter-spacing="-0.3">5</text><text transform="translate(343.6,111.8) rotate(-90) scale(1,1.02)" font-size="7.4" font-weight="bold" fill="#0a0a0a" font-family="Liberation Sans, sans-serif" letter-spacing="-0.3">14.00</text><text transform="translate(343.6,142.0) rotate(-90) scale(1,1.02)" font-size="7.4" font-weight="bold" fill="#0a0a0a" font-family="Liberation Sans, sans-serif" letter-spacing="-0.3">13.00</text><text transform="translate(343.6,172.2) rotate(-90) scale(1,1.02)" font-size="7.4" font-weight="bold" fill="#0a0a0a" font-family="Liberation Sans, sans-serif" letter-spacing="-0.3">12.00</text><text transform="translate(343.6,202.4) rotate(-90) scale(1,1.02)" font-size="7.4" font-weight="bold" fill="#0a0a0a" font-family="Liberation Sans, sans-serif" letter-spacing="-0.3">11.00</text><text transform="translate(343.6,232.6) rotate(-90) scale(1,1.02)" font-size="7.4" font-weight="bold" fill="#0a0a0a" font-family="Liberation Sans, sans-serif" letter-spacing="-0.3">10.00</text></svg><div style="left:325.8px;top:222.5px;width:294.5px;height:369px;background:#050505;"></div>
<div style="left:330px;top:226px;width:287px;height:14.5px;background:#3d3d3d;"></div>
<span style="left:333.5px;top:228.30px;font-size:8px;line-height:10px;color:#dadada;">Leuchten</span>
<div style="left:330px;top:240.5px;width:287px;height:346.5px;background:#2b2b2b;"></div>
<div style="left:330px;top:242px;width:287px;height:16px;background:#202020;"></div>
<div style="left:330px;top:242px;width:45px;height:16px;background:#3b3b3b;"></div>
<span style="left:345px;top:245.20px;font-size:8px;line-height:10px;color:#dcdcdc;">Verlauf</span>
<div style="left:377.5px;top:242px;width:53.5px;height:16px;background:#3b3b3b;"></div>
<span style="left:393.5px;top:245.20px;font-size:8px;line-height:10px;color:#dcdcdc;">Favoriten</span>
<div style="left:433.5px;top:242px;width:46px;height:16px;background:#3b3b3b;"></div>
<span style="left:449.5px;top:245.20px;font-size:8px;line-height:10px;color:#dcdcdc;">Ordner</span>
<div style="left:482px;top:242px;width:51.5px;height:16px;background:#3f3f3f;"></div>
<span style="left:497.5px;top:245.20px;font-size:8px;line-height:10px;color:#dcdcdc;">Kataloge</span>
<div style="left:330px;top:258px;width:287px;height:1.8px;background:#404040;"></div>
<svg style="left:334px;top:245.2px" width="8" height="8" viewBox="0 0 8 8"><circle cx="4" cy="4" r="3" fill="#f0f0f0"/></svg>
<svg style="left:381.5px;top:245px" width="9" height="9" viewBox="0 0 9 9"><path d="M4.5 1.2 L5.4 3.6 L7.8 4.5 L5.4 5.4 L4.5 7.8 L3.6 5.4 L1.2 4.5 L3.6 3.6 Z" fill="#eee"/></svg>
<svg style="left:437px;top:245.4px" width="9" height="8" viewBox="0 0 9 8"><path d="M1 1.5 H3.6 L4.5 2.8 H8 V7 H1 Z" fill="#e4e4e4"/></svg>
<svg style="left:487px;top:244.6px" width="7" height="10" viewBox="0 0 7 10"><rect x="1" y="1" width="5" height="8" fill="#f2f2f2"/></svg>
<div style="left:331.5px;top:261.5px;width:117.5px;height:15px;background:#171717;"></div>
<span style="left:335px;top:264.30px;font-size:8px;line-height:10px;color:#989898;font-style:italic;">Suchen</span>
<svg style="left:436.5px;top:264px" width="10" height="10" viewBox="0 0 10 10"><circle cx="5.8" cy="3.9" r="2.5" fill="none" stroke="#a8a8a8" stroke-width="0.9"/><path d="M4 5.9 L1.4 8.8" stroke="#a8a8a8" stroke-width="1.2"/></svg>
<div style="left:591.5px;top:262.5px;width:10px;height:10.5px;background:#2b2b2b;border:1px solid #b0b0b0;"></div>
<div style="left:594px;top:265.5px;width:5px;height:4.5px;background:#e8e8e8;"></div>
<div style="left:605px;top:264.5px;width:8px;height:8px;background:#383838;"></div>
<div style="left:330px;top:280px;width:273px;height:288px;background:#303030;"></div>
<div style="left:565px;top:280px;width:38.5px;height:288px;background:#3c3c3c;"></div>
<div style="left:603.5px;top:281px;width:12px;height:287px;background:#282828;"></div>
<div style="left:606px;top:283px;width:8px;height:62px;background:#3a3a3a;"></div>
<div style="left:330px;top:280px;width:287px;height:287.5px;overflow:hidden;background:transparent;"><div style="left:-330px;top:-280px;width:620px;height:700px;">
<div style="left:336.5px;top:284px;width:73.5px;height:57.2px;background:#000000;"></div>
<div style="left:343.0px;top:284px;width:62px;height:57px;background:#d3d3d3;"></div><svg style="left:343.0px;top:284px" width="62" height="57" viewBox="0 0 62 57"><path d="M9 10.5 L52.5 14.5 L52.5 37 L9 39 Z" fill="#5b5d52"/><path d="M12.5 14 L50 17.2 L50 34.5 L12.5 35.8 Z" fill="#c9cdc8"/><path d="M12.5 24 L50 25.3 L50 27.3 L12.5 26.2 Z" fill="#969b94"/><path d="M12.5 14 L50 17.2 L50 20 L12.5 17.2 Z" fill="#e9ebe7"/></svg>
<div style="left:398.8px;top:286.6px;width:9.2px;height:9.2px;background:#0a7a3c;"></div><svg style="left:398.8px;top:286.6px" width="9.2" height="9.2" viewBox="0 0 9 9"><path d="M2.4 6.2 L4.5 3 L6.6 6.2 Z" fill="#eafff0"/></svg>
<div style="left:336.5px;top:342.5px;width:73.5px;height:14px;background:#212121;"></div>
<span style="left:341.5px;top:344.70px;font-size:8px;line-height:10px;color:#d6d6d6;">Kubus (TM9367...</span>
<div style="left:413px;top:284px;width:73.5px;height:57.2px;background:#000000;"></div>
<svg style="left:422px;top:284px" width="55" height="57" viewBox="0 0 55 57" preserveAspectRatio="none">
<defs><linearGradient id="xg" x1="0" y1="0" x2="1" y2="1"><stop offset="0" stop-color="#dcdee2"/><stop offset="1" stop-color="#c6cad0"/></linearGradient></defs>
<rect width="55" height="57" fill="url(#xg)"/>
<path d="M-1 14.4 L35 0 M44 -2 L57 12 M-1 44 L19 58 M57 33 L38 58" stroke="#b6bac0" stroke-width="0.8" fill="none"/>
<path d="M5.6 32.6 L22.9 17.4 L49 28 L29.5 41.3 Z" fill="#f1ecdf" stroke="#f8f4e8" stroke-width="1.2"/>
<path d="M14.4 31.2 L24.2 23.8 L40.2 28.6 L28.2 36.6 Z" fill="#a4acb8"/></svg>
<div style="left:475.3px;top:286.6px;width:9.2px;height:9.2px;background:#0a7a3c;"></div><svg style="left:475.3px;top:286.6px" width="9.2" height="9.2" viewBox="0 0 9 9"><path d="M2.4 6.2 L4.5 3 L6.6 6.2 Z" fill="#eafff0"/></svg>
<div style="left:413px;top:342.5px;width:73.5px;height:14px;background:#212121;"></div>
<span style="left:418px;top:344.70px;font-size:8px;line-height:10px;color:#d6d6d6;">XL-20 LED - 29...</span>
<div style="left:412px;top:283px;width:75.5px;height:75px;background:transparent;border:1.3px solid #b4561c;"></div>
<div style="left:490px;top:284px;width:73.5px;height:57.2px;background:#000000;"></div>
<div style="left:490px;top:290px;width:72.5px;height:45.5px;background:#d9d9d9;"></div><svg style="left:490px;top:290px" width="72.5" height="45.5" viewBox="0 0 72.5 45.5"><path d="M16 0 L15.5 28 M56.5 0 L55 18" stroke="#8a8a8a" stroke-width="0.6"/><path d="M11 29.5 L55 20 L59 21.5 L59 23 L14 33 L11 31.5 Z" fill="#3c4146"/><path d="M11 29.5 L55 20 L59 21.5 L14 31.3 Z" fill="#6a7076"/></svg>
<div style="left:552.3px;top:286.6px;width:9.2px;height:9.2px;background:#0a7a3c;"></div><svg style="left:552.3px;top:286.6px" width="9.2" height="9.2" viewBox="0 0 9 9"><path d="M2.4 6.2 L4.5 3 L6.6 6.2 Z" fill="#eafff0"/></svg>
<div style="left:490px;top:342.5px;width:73.5px;height:14px;background:#212121;"></div>
<span style="left:495px;top:344.70px;font-size:8px;line-height:10px;color:#d6d6d6;">Oval-S 210, Pen...</span>
<div style="left:336.5px;top:360.5px;width:73.5px;height:57.2px;background:#000000;"></div>
<svg style="left:344.0px;top:360.5px" width="57.5" height="57" viewBox="0 0 57.5 57" preserveAspectRatio="none">
<defs><linearGradient id="pg" x1="0" y1="0" x2="0" y2="1"><stop offset="0" stop-color="#3c3c3c"/><stop offset="0.5" stop-color="#767676"/><stop offset="1" stop-color="#b4b4b4"/></linearGradient></defs>
<rect width="57.5" height="57" fill="url(#pg)"/><path d="M28.5 0 V26" stroke="#a8a8a8" stroke-width="0.6"/>
<ellipse cx="28.5" cy="29.8" rx="21" ry="3.9" fill="#9c9c9c"/><ellipse cx="28.5" cy="28.6" rx="21" ry="3.5" fill="#e4e4e4"/></svg>
<div style="left:398.8px;top:363.1px;width:9.2px;height:9.2px;background:#0a7a3c;"></div><svg style="left:398.8px;top:363.1px" width="9.2" height="9.2" viewBox="0 0 9 9"><path d="M2.4 6.2 L4.5 3 L6.6 6.2 Z" fill="#eafff0"/></svg>
<div style="left:336.5px;top:419.0px;width:73.5px;height:14px;background:#212121;"></div>
<span style="left:341.5px;top:421.20px;font-size:8px;line-height:10px;color:#d6d6d6;">Pendelleuchte S...</span>
<div style="left:413px;top:360.5px;width:73.5px;height:57.2px;background:#000000;"></div>
<svg style="left:422px;top:360.5px" width="55" height="57" viewBox="0 0 55 57" preserveAspectRatio="none">
<defs><linearGradient id="eg" x1="0" y1="0" x2="0" y2="1"><stop offset="0" stop-color="#a6a6a6"/><stop offset="1" stop-color="#d0d0d0"/></linearGradient></defs>
<rect width="55" height="57" fill="url(#eg)"/><ellipse cx="27.5" cy="27" rx="10.6" ry="5.6" fill="#8c8c8c"/><ellipse cx="27.5" cy="27.2" rx="8.6" ry="4.4" fill="#c4c4c4"/><ellipse cx="27.5" cy="27.4" rx="6.6" ry="3.3" fill="#262626"/></svg>
<div style="left:475.3px;top:363.1px;width:9.2px;height:9.2px;background:#0a7a3c;"></div><svg style="left:475.3px;top:363.1px" width="9.2" height="9.2" viewBox="0 0 9 9"><path d="M2.4 6.2 L4.5 3 L6.6 6.2 Z" fill="#eafff0"/></svg>
<div style="left:413px;top:419.0px;width:73.5px;height:14px;background:#212121;"></div>
<span style="left:418px;top:421.20px;font-size:8px;line-height:10px;color:#d6d6d6;">ET (Inperla)LP C...</span>
<div style="left:490px;top:360.5px;width:73.5px;height:57.2px;background:#000000;"></div>
<svg style="left:498px;top:360.5px" width="57" height="57" viewBox="0 0 57 57" preserveAspectRatio="none">
<defs><linearGradient id="ng" x1="0" y1="0" x2="0" y2="1"><stop offset="0" stop-color="#2c3444"/><stop offset="0.5" stop-color="#5c6678"/><stop offset="1" stop-color="#8a93a3"/></linearGradient></defs>
<rect width="57" height="57" fill="url(#ng)"/>
<path d="M17 22 H40 V36 H17 Z" fill="#aeb4bf"/><path d="M20 18 H37 V24 H20 Z" fill="#d6dae2"/><path d="M19 27 H38 M19 31 H38" stroke="#4a5262" stroke-width="1.2"/>
<ellipse cx="28.5" cy="47" rx="12.5" ry="8" fill="#e9ebef"/><ellipse cx="28.5" cy="47.5" rx="9" ry="5.6" fill="#3a4252"/><ellipse cx="28.5" cy="48" rx="5.5" ry="3.4" fill="#c6cad2"/><path d="M20 40 H37 V43 H20 Z" fill="#1e2430"/></svg>
<div style="left:552.3px;top:363.1px;width:9.2px;height:9.2px;background:#0a7a3c;"></div><svg style="left:552.3px;top:363.1px" width="9.2" height="9.2" viewBox="0 0 9 9"><path d="M2.4 6.2 L4.5 3 L6.6 6.2 Z" fill="#eafff0"/></svg>
<div style="left:490px;top:419.0px;width:73.5px;height:14px;background:#212121;"></div>
<span style="left:495px;top:421.20px;font-size:8px;line-height:10px;color:#d6d6d6;">PANOS HF PSP...</span>
<div style="left:336.5px;top:437px;width:73.5px;height:57.2px;background:#000000;"></div>
<div style="left:344.0px;top:437px;width:58px;height:57px;background:#d6d6d6;"></div><svg style="left:344.0px;top:437px" width="58" height="57" viewBox="0 0 58 57"><path d="M15 6.5 H33 V9.2 H15 Z" fill="#6a6a6a"/><path d="M24 9 L22 24" stroke="#7a7a7a" stroke-width="2.2"/><path d="M14 23 L27 20 L31 31 L22 39 L13 33 Z" fill="#a3a29c"/><path d="M13 33 L22 39 L31 31 L27 29.5 L20 35 Z" fill="#6e6d68"/><path d="M14 23 L27 20 L24.5 24.5 L15 27 Z" fill="#c2c1bb"/></svg>
<div style="left:398.8px;top:439.6px;width:9.2px;height:9.2px;background:#0a7a3c;"></div><svg style="left:398.8px;top:439.6px" width="9.2" height="9.2" viewBox="0 0 9 9"><path d="M2.4 6.2 L4.5 3 L6.6 6.2 Z" fill="#eafff0"/></svg>
<div style="left:336.5px;top:495.5px;width:73.5px;height:14px;background:#212121;"></div>
<span style="left:341.5px;top:497.70px;font-size:8px;line-height:10px;color:#d6d6d6;">37 CUBE SEMIN...</span>
<div style="left:413px;top:437px;width:73.5px;height:57.2px;background:#000000;"></div>
<div style="left:422px;top:437px;width:55px;height:57px;background:#dcdcdc;"></div><svg style="left:422px;top:437px" width="55" height="57" viewBox="0 0 55 57"><path d="M5 30 L27.5 21.5 L50 30 L27.5 35.5 Z" fill="#c6c6c6"/><path d="M5 30 L27.5 35.5 L50 30 L50 31 L27.5 36.7 L5 31 Z" fill="#a0a0a0"/></svg>
<div style="left:475.3px;top:439.6px;width:9.2px;height:9.2px;background:#0a7a3c;"></div><svg style="left:475.3px;top:439.6px" width="9.2" height="9.2" viewBox="0 0 9 9"><path d="M2.4 6.2 L4.5 3 L6.6 6.2 Z" fill="#eafff0"/></svg>
<div style="left:413px;top:495.5px;width:73.5px;height:14px;background:#212121;"></div>
<span style="left:418px;top:497.70px;font-size:8px;line-height:10px;color:#d6d6d6;">ELIA PL - M2 60...</span>
<div style="left:490px;top:437px;width:73.5px;height:57.2px;background:#000000;"></div>
<div style="left:498px;top:437px;width:57px;height:57px;background:#dedede;"></div><svg style="left:498px;top:437px" width="57" height="57" viewBox="0 0 57 57"><path d="M16 5 H46 V10 H41 V14 H22 V10 H16 Z" fill="#9c9ea2"/><circle cx="12" cy="7" r="3.2" fill="#c8c8c8" stroke="#777" stroke-width="0.8"/><path d="M4 10 C2 18 6 24 13 25" stroke="#9a3a32" stroke-width="1.3" fill="none"/><path d="M15 24 H36 V31 H15 Z" fill="#b4b6ba"/><circle cx="20" cy="27.5" r="2.3" fill="#666"/><circle cx="31" cy="27.5" r="2.3" fill="#666"/><ellipse cx="28" cy="36" rx="7" ry="2.2" fill="#8c8c8c"/><path d="M17 49 C17 41 39 41 39 49 C39 53 35 57 28 57 C21 57 17 53 17 49 Z" fill="#c6c6c6"/><ellipse cx="28" cy="48" rx="7" ry="3.6" fill="#efefef"/></svg>
<div style="left:552.3px;top:439.6px;width:9.2px;height:9.2px;background:#0a7a3c;"></div><svg style="left:552.3px;top:439.6px" width="9.2" height="9.2" viewBox="0 0 9 9"><path d="M2.4 6.2 L4.5 3 L6.6 6.2 Z" fill="#eafff0"/></svg>
<div style="left:490px;top:495.5px;width:73.5px;height:14px;background:#212121;"></div>
<span style="left:495px;top:497.70px;font-size:8px;line-height:10px;color:#d6d6d6;">RESCLITE C AN...</span>
<div style="left:336.5px;top:514px;width:73.5px;height:57.2px;background:#000000;"></div>
<div style="left:345.0px;top:514px;width:56px;height:53.5px;background:#d4d4d4;"></div><svg style="left:345.0px;top:514px" width="56" height="53.5" viewBox="0 0 56 53.5"><path d="M17 9 C19 6.5 36 6.5 38.5 9 L40 20 C40 24 37 26.5 33 26.5 L23 26.5 C19 26.5 16 24 16 20 Z" fill="#3e4654"/><path d="M20 12 H36 V19.5 H20 Z" fill="#c9cdd4"/><path d="M20 13.5 H36 M20 15.5 H36 M20 17.5 H36" stroke="#8f96a2" stroke-width="0.7"/><path d="M21 22 H35 V25 H21 Z" fill="#9aa0ab"/><path d="M24 26.5 H32 V29 H24 Z" fill="#232833"/><ellipse cx="28" cy="52.5" rx="10" ry="9" fill="#e2dccc" stroke="#56606e" stroke-width="2.2"/></svg>
<div style="left:398.8px;top:516.6px;width:9.2px;height:9.2px;background:#0a7a3c;"></div><svg style="left:398.8px;top:516.6px" width="9.2" height="9.2" viewBox="0 0 9 9"><path d="M2.4 6.2 L4.5 3 L6.6 6.2 Z" fill="#eafff0"/></svg>
<div style="left:413px;top:514px;width:73.5px;height:57.2px;background:#000000;"></div>
<svg style="left:413px;top:514px" width="73.5" height="53.5" viewBox="0 0 73.5 53.5"><path d="M36.5 8 C44.5 8 48.5 14 47.2 20 C46.2 25.5 41.8 30 41.5 37 L31.5 37 C31.2 30 26.8 25.5 25.8 20 C24.5 14 28.5 8 36.5 8 Z" fill="none" stroke="#dedede" stroke-width="0.75"/><path d="M32 38 H41 V46 C41 48 39 49.5 36.5 49.5 C34 49.5 32 48 32 46 Z" fill="#c4c4c4"/><path d="M32 40.5 H41 M32 43 H41 M32 45.5 H41" stroke="#555" stroke-width="0.8"/></svg>
<div style="left:475.3px;top:516.6px;width:9.2px;height:9.2px;background:#0a7a3c;"></div><svg style="left:475.3px;top:516.6px" width="9.2" height="9.2" viewBox="0 0 9 9"><path d="M2.4 6.2 L4.5 3 L6.6 6.2 Z" fill="#eafff0"/></svg>
<div style="left:490px;top:514px;width:73.5px;height:57.2px;background:#000000;"></div>
<svg style="left:490px;top:521px" width="73.5" height="43" viewBox="0 0 73.5 43" preserveAspectRatio="none">
<defs><radialGradient id="xgx" cx="0.5" cy="0.45" r="0.8"><stop offset="0" stop-color="#545454"/><stop offset="1" stop-color="#242424"/></radialGradient></defs>
<rect width="73.5" height="43" fill="url(#xgx)"/>
<g transform="rotate(3 36 22)"><path d="M12 9.5 L55 12 L57.5 14 L57.5 32 L55 34 L15 32 L12 29.5 Z" fill="#7d8381"/><path d="M15 30 L56 32.5 L57.5 32 L55 35.5 L15 33 Z" fill="#1c1c1c"/>
<path d="M17 11 L54 13.5 L54 30.5 L17 28 Z" fill="#0b6a30"/>
<path d="M49 15 L53 15.3 L53 28.5 L49 28.2 Z" fill="#e4f3e8"/><path d="M13.3 12.5 L16 12.7 L16 27.5 L13.3 27 Z" fill="#c9cfcd"/>
<path d="M26 16 L30 19.5 L27 25.5 M30 19.5 L34 17.5 M29 21.5 L32.5 26" stroke="#e9f8ee" stroke-width="1.6" fill="none"/><circle cx="31" cy="15.2" r="1.5" fill="#e9f8ee"/>
<path d="M37 21 H44.5 M42 18.3 L45.3 21 L42 23.7" stroke="#e9f8ee" stroke-width="1.4" fill="none"/></g></svg>
<div style="left:552.3px;top:516.6px;width:9.2px;height:9.2px;background:#0a7a3c;"></div><svg style="left:552.3px;top:516.6px" width="9.2" height="9.2" viewBox="0 0 9 9"><path d="M2.4 6.2 L4.5 3 L6.6 6.2 Z" fill="#eafff0"/></svg>
</div></div>
<div style="left:330px;top:567.3px;width:287px;height:4.4px;background:#191919;"></div>
<div style="left:330px;top:571.5px;width:287px;height:15.7px;background:#2f2f2f;"></div>
<div style="left:331.3px;top:576.6px;width:6.4px;height:6.2px;background:#141414;border:1px solid #4a4a4a;"></div>
<svg style="left:331.3px;top:576.6px" width="6.4" height="6.2" viewBox="0 0 6.4 6.2"><circle cx="3.2" cy="2.4" r="1" fill="#bbb"/><path d="M1.6 5.4 C1.6 3.6 4.8 3.6 4.8 5.4 Z" fill="#bbb"/></svg>
<div style="left:343px;top:580px;width:46px;height:1.1px;background:#747474;"></div>
<div style="left:389.6px;top:577.5px;width:6.2px;height:6.2px;background:#6e6e6e;border-radius:3.1px;border:1px solid #a8a8a8;"></div>
<div style="left:397.4px;top:576px;width:10.6px;height:8.4px;background:#111111;border:1px solid #7a7a7a;"></div>
<svg style="left:397.4px;top:576px" width="10.6" height="8.4" viewBox="0 0 10.6 8.4"><circle cx="5.3" cy="3" r="1.8" fill="#eee"/><path d="M2.2 8.4 C2.2 4.8 8.4 4.8 8.4 8.4 Z" fill="#eee"/></svg>
</div></body></html>
